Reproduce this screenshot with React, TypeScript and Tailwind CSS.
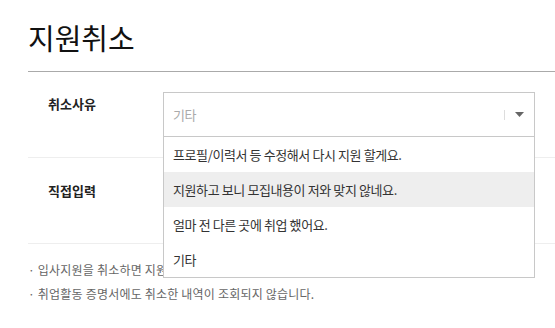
export default function App() {
  const options = [
    "프로필/이력서 등 수정해서 다시 지원 할게요.",
    "지원하고 보니 모집내용이 저와 맞지 않네요.",
    "얼마 전 다른 곳에 취업 했어요.",
    "기타",
  ];
  return (
    <div
      className="w-[555px] h-[328px] overflow-hidden bg-white pl-[28px] text-[#333]"
      style={{ fontFamily: '"Noto Sans CJK KR", "Noto Sans", sans-serif' }}
    >
      <h1 className="pt-[19px] h-[71px] text-[29px] leading-[36px] font-normal text-[#111]">
        지원취소
      </h1>
      <div className="h-px bg-[#aaaaaa]" />
      <div className="relative">
        <div className="flex h-[86px] border-b border-[#eeeeee]">
          <div className="w-[135px] pl-[20px] pt-[24px] text-[13px] leading-[16px] font-bold text-[#222]">
            취소사유
          </div>
          <div className="relative pt-[20px]">
            <div className="relative z-10 w-[372px] border border-[#c8c8c8] bg-white">
              <div className="flex h-[44px] items-center border-b border-[#c8c8c8] pl-[9px] pr-[10px]">
                <span className="flex-1 text-[13px] tracking-[-0.4px] text-[#aaaaaa]">기타</span>
                <span className="h-[10px] w-px bg-[#dddddd]" />
                <svg width="9" height="5" viewBox="0 0 9 5" className="ml-[10px]">
                  <path d="M0 0H9L4.5 5Z" fill="#666" />
                </svg>
              </div>
              <ul>
                {options.map((o, i) => (
                  <li
                    key={o}
                    className={
                      i === 1
                        ? "flex h-[35px] items-center bg-[#eeeeee] pl-[9px] text-[13px] tracking-[-0.4px] text-[#333]"
                        : "flex h-[35px] items-center pl-[9px] text-[13px] tracking-[-0.4px] text-[#333]"
                    }
                  >
                    {o}
                  </li>
                ))}
              </ul>
            </div>
          </div>
        </div>
        <div className="flex h-[86px] border-b border-[#eeeeee]">
          <div className="w-[135px] pl-[20px] pt-[25px] text-[13px] leading-[16px] font-bold text-[#222]">
            직접입력
          </div>
        </div>
      </div>
      <ul className="pt-[14px] text-[12px] leading-[24px] tracking-[0.2px] text-[#666]">
        <li>· 입사지원을 취소하면 지원 내역이 삭제됩니다.</li>
        <li>· 취업활동 증명서에도 취소한 내역이 조회되지 않습니다.</li>
      </ul>
    </div>
  );
}
